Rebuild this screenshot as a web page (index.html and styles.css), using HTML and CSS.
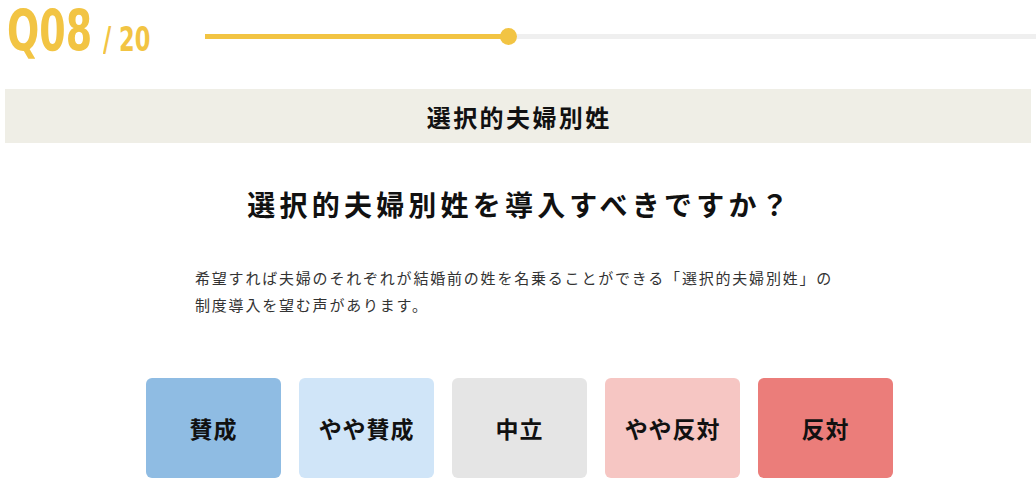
FILE: index.html
```html
<!DOCTYPE html>
<html lang="ja">
<head>
<meta charset="utf-8">
<title>選択的夫婦別姓</title>
<link rel="stylesheet" href="styles.css">
</head>
<body>
<header class="top">
  <div class="qnum"><span class="qcur">Q08</span><span class="qtotal">/ 20</span></div>
  <div class="progress">
    <div class="progress-fill" style="width: 36.5%"><span class="progress-knob"></span></div>
  </div>
</header>
<div class="category">選択的夫婦別姓</div>
<h1 class="question">選択的夫婦別姓を導入すべきですか？</h1>
<p class="desc">希望すれば夫婦のそれぞれが結婚前の姓を名乗ることができる「選択的夫婦別姓」の制度導入を望む声があります。</p>
<div class="choices">
  <button class="choice c1">賛成</button>
  <button class="choice c2">やや賛成</button>
  <button class="choice c3">中立</button>
  <button class="choice c4">やや反対</button>
  <button class="choice c5">反対</button>
</div>
</body>
</html>
```

FILE: styles.css
```css
* { box-sizing: border-box; }
html, body { margin: 0; padding: 0; background: #fff; }
body {
  font-family: "Noto Sans CJK JP", "Noto Sans", sans-serif;
  color: #111;
}
.top {
  display: flex;
  align-items: center;
  height: 73px;
  margin-bottom: 16px;
}
.qnum {
  width: 205px;
  flex: none;
  align-self: flex-start;
  margin-top: 3px;
  padding-left: 7px;
  color: #f2c443;
  font-family: "DejaVu Sans Condensed", "DejaVu Sans", sans-serif;
  font-weight: bold;
  white-space: nowrap;
  line-height: 1;
}
.qcur {
  display: inline-block;
  font-size: 57px;
  transform: scaleX(0.74);
  transform-origin: left bottom;
}
.qtotal {
  display: inline-block;
  font-size: 33px;
  margin-left: -19px;
  transform: scaleX(0.76);
  transform-origin: left bottom;
}
.progress {
  flex: 1;
  height: 5px;
  background: #efefef;
  position: relative;
}
.progress-fill {
  height: 100%;
  background: #f2c443;
  position: relative;
}
.progress-knob {
  position: absolute;
  right: -8.5px;
  top: 50%;
  width: 17px;
  height: 17px;
  margin-top: -8.5px;
  border-radius: 50%;
  background: #f2c443;
}
.category {
  margin: 0 5px;
  height: 54px;
  background: #efeee6;
  display: flex;
  align-items: center;
  justify-content: center;
  font-size: 24px;
  font-weight: bold;
  letter-spacing: 0.1em;
  padding-left: 0.1em;
}
.question {
  margin: 42px 0 0;
  text-align: center;
  font-size: 28px;
  line-height: 39px;
  font-weight: bold;
  letter-spacing: 0.15em;
  padding-left: 0.15em;
}
.desc {
  width: 646px;
  margin: 40px auto 0;
  font-size: 15px;
  line-height: 27px;
  letter-spacing: 0.12em;
  color: #333;
  font-weight: 400;
}
.choices {
  display: flex;
  justify-content: center;
  gap: 18px;
  margin-top: 60px;
  padding-left: 3px;
}
.choice {
  width: 135px;
  height: 100px;
  border: none;
  border-radius: 6px;
  font-family: inherit;
  font-size: 23px;
  font-weight: bold;
  letter-spacing: 0.04em;
  color: #111;
  padding: 0;
  cursor: pointer;
}
.c1 { background: #8fbce3; }
.c2 { background: #d0e5f8; }
.c3 { background: #e5e5e5; }
.c4 { background: #f6c6c3; }
.c5 { background: #eb7d7a; }
```
